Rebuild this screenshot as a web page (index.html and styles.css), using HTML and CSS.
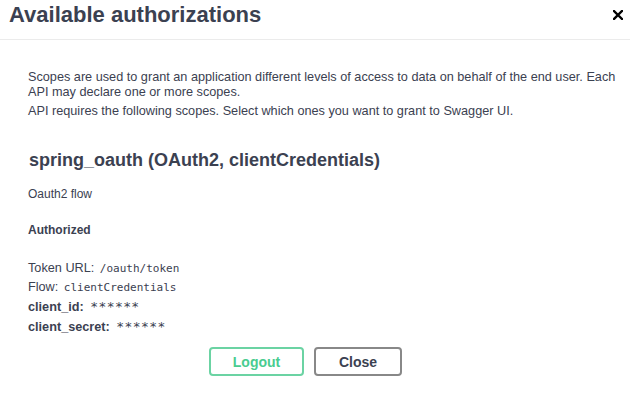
FILE: index.html
```html
<!DOCTYPE html>
<html>
<head>
<meta charset="utf-8">
<link rel="stylesheet" href="styles.css">
</head>
<body>
<div class="modal">
  <div class="modal-header">
    <h3 class="modal-title">Available authorizations</h3>
    <button class="close-btn" aria-label="Close">
      <svg width="10" height="10" viewBox="0 0 10 10"><path d="M1 1 L9 9 M9 1 L1 9" stroke="#000" stroke-width="2.4" stroke-linecap="square"/></svg>
    </button>
  </div>
  <div class="modal-content">
    <p class="scope-desc">Scopes are used to grant an application different levels of access to data on behalf of the end user. Each API may declare one or more scopes.</p>
    <p class="scope-req">API requires the following scopes. Select which ones you want to grant to Swagger UI.</p>
    <h4 class="auth-title">spring_oauth (OAuth2, clientCredentials)</h4>
    <p class="flow-desc">Oauth2 flow</p>
    <h6 class="authorized">Authorized</h6>
    <p class="info-row">Token URL: <code class="mono">/oauth/token</code></p>
    <p class="info-row">Flow: <code class="mono">clientCredentials</code></p>
    <p class="cred-row"><span class="cred-label">client_id:</span> <code class="stars">******</code></p>
    <p class="cred-row"><span class="cred-label">client_secret:</span> <code class="stars">******</code></p>
    <div class="btn-wrapper">
      <button class="btn btn-logout">Logout</button>
      <button class="btn btn-close">Close</button>
    </div>
  </div>
</div>
</body>
</html>
```

FILE: styles.css
```css
html, body {
  margin: 0;
  padding: 0;
  background: #fff;
}
body {
  font-family: "Liberation Sans", Arial, sans-serif;
  color: #3b4151;
}
.modal {
  width: 630px;
}
.modal-header {
  height: 40px;
  box-sizing: border-box;
  border-bottom: 1px solid #ebebeb;
  display: flex;
  justify-content: space-between;
  align-items: flex-start;
  padding: 2px 7px 0 9px;
}
.modal-title {
  margin: 0;
  font-size: 22px;
  font-weight: 700;
  line-height: 25px;
  color: #3b4151;
}
.close-btn {
  border: 0;
  background: none;
  padding: 0;
  margin-top: 8px;
  width: 10px;
  height: 10px;
  display: flex;
}
.modal-content {
  padding: 0 10px 0 28px;
}
p {
  margin: 0;
  font-size: 12.7px;
  line-height: 15.3px;
}
.scope-desc {
  margin-top: 30px;
}
.scope-req {
  margin-top: 3px;
}
.auth-title {
  margin: 31px 0 0 1px;
  font-size: 18px;
  font-weight: 700;
  line-height: 21px;
}
.flow-desc {
  margin-top: 16px;
  font-size: 12px;
}
.authorized {
  margin: 21px 0 0;
  font-size: 12px;
  font-weight: 700;
  line-height: 15px;
}
.info-row {
  margin-top: 21px;
  line-height: 19px;
}
.info-row + .info-row {
  margin-top: 0;
}
.mono {
  font-family: "DejaVu Sans Mono", monospace;
  font-size: 11px;
  line-height: 1;
  margin-left: 2px;
  color: #3b4151;
}
.cred-row {
  margin-top: 1px;
  line-height: 19.5px;
  font-weight: 700;
}
.cred-row + .cred-row {
  margin-top: 0;
}
.cred-label {
  font-weight: 700;
}
.stars {
  font-family: "DejaVu Sans Mono", monospace;
  font-weight: 400;
  font-size: 13px;
  line-height: 1;
  letter-spacing: 0.4px;
  margin-left: 3px;
}
.btn-wrapper {
  display: flex;
  justify-content: center;
  gap: 10px;
  padding: 10px 37px 0 0;
}
.btn {
  font-family: "Liberation Sans", Arial, sans-serif;
  font-size: 14px;
  font-weight: 700;
  background: #fff;
  border: 2px solid;
  border-radius: 4px;
  height: 29px;
  padding: 0;
  box-sizing: border-box;
}
.btn-logout {
  width: 95px;
  color: #49cc90;
  border-color: #6bd3a3;
}
.btn-close {
  width: 88px;
  color: #3b4151;
  border-color: #888;
}
```
